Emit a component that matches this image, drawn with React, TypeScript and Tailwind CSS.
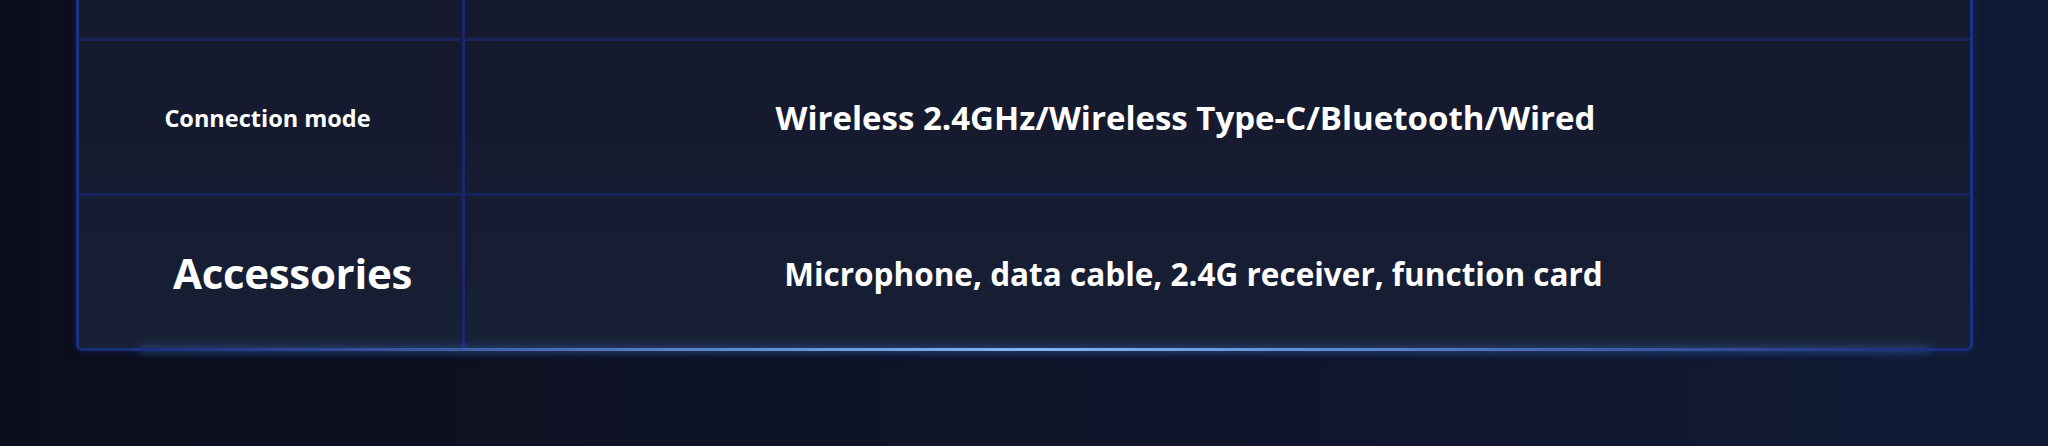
import React from "react";

const rows = [
  { label: "", value: "", labelClass: "", valueClass: "" },
  {
    label: "Connection mode",
    value: "Wireless 2.4GHz/Wireless Type-C/Bluetooth/Wired",
    labelClass: "text-[23.5px] pt-[4px] pr-[6px]",
    valueClass: "text-[33px] pt-[2px] pr-[64px]",
  },
  {
    label: "Accessories",
    value: "Microphone, data cable, 2.4G receiver, function card",
    labelClass: "text-[42px] tracking-[-0.3px] pl-[44px]",
    valueClass: "text-[31.5px] pt-[3px] pr-[48px]",
  },
];

function SpecTable() {
  return (
    <div className="relative ml-[76px] -mt-[117px] w-[1897px] rounded-b-[6px] border-x-[3px] border-b-[3px] border-x-[#1c3184] border-b-[#1b2c7c] bg-gradient-to-b from-[#151a2d] via-[#161a2f] to-[#172036] shadow-[0_0_10px_rgba(30,60,160,0.3)]">
      {rows.map((row, i) => (
        <div
          key={i}
          className={`grid h-[155px] grid-cols-[386px_1fr] ${
            i > 0 ? "border-t-[3px] border-[#18225e]" : ""
          }`}
        >
          <div
            className={`flex items-center justify-center border-r-[3px] border-[#1a2770] font-bold text-white ${row.labelClass}`}
          >
            {row.label}
          </div>
          <div
            className={`flex items-center justify-center font-bold text-white ${row.valueClass}`}
          >
            {row.value}
          </div>
        </div>
      ))}
      {/* bright glow along the bottom edge */}
      <div className="pointer-events-none absolute -bottom-[3px] left-[60px] right-[40px] h-[3px] bg-gradient-to-r from-transparent via-[#80b8f7] to-transparent shadow-[0_0_8px_rgba(80,150,255,0.7)]" />
    </div>
  );
}

export default function App() {
  return (
    <div className="h-[446px] w-full overflow-hidden bg-gradient-to-r from-[#0b0e1c] via-[#0f1429] to-[#111b36] font-['Open_Sans',sans-serif]">
      <SpecTable />
    </div>
  );
}
